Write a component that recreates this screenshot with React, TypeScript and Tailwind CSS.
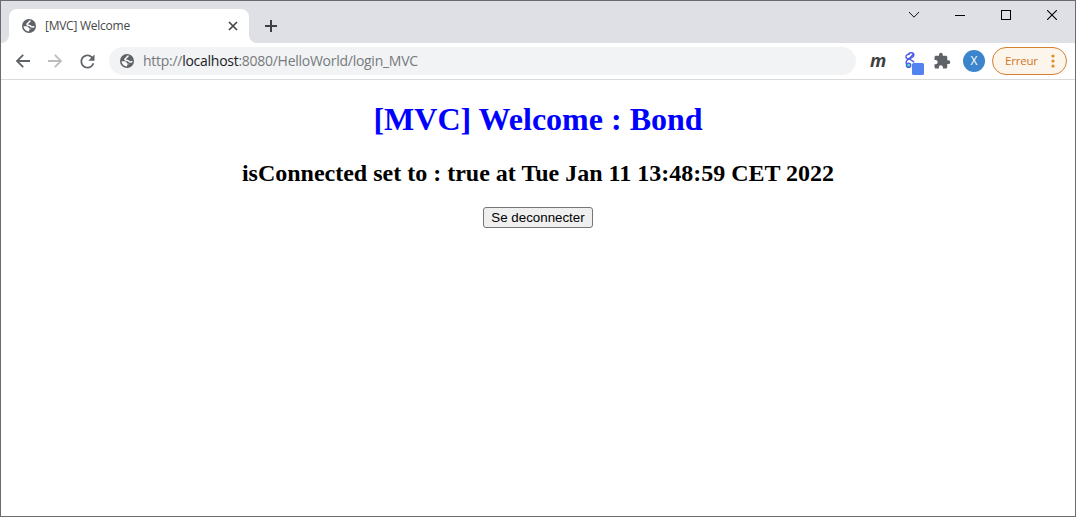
import type { ReactNode } from "react";
import { MdRefresh, MdExtension } from "react-icons/md";

function Globe() {
  return (
    <svg width="14" height="14" viewBox="0 0 14 14" className="block shrink-0">
      <circle cx="7" cy="7" r="7" fill="#5f6368" />
      <path
        d="M8.6 2C6.8 2.3 7.2 3.5 6 4.1 4.7 4.8 4.6 6 5.8 6.2c1.6.2 2.5.2 3.1 1.2.7 1 2.2.6 3.4-.1"
        fill="none"
        stroke="#fff"
        strokeWidth="1.5"
      />
      <path d="M1.5 7.3h2.7c1.7 0 2.6.9 2.7 2.1h1.6v1.2H7.1v1.8A5.5 5.5 0 0 1 1.5 7.3Z" fill="#fff" />
    </svg>
  );
}

function Arrow({ d, className }: { d: string; className?: string }) {
  return (
    <svg width="20" height="20" viewBox="0 0 20 20" className={className}>
      <path d={d} fill="none" stroke="currentColor" strokeWidth="1.8" />
    </svg>
  );
}

function WindowControl({ children }: { children: ReactNode }) {
  return <div className="flex h-[28px] w-[46px] items-center justify-center">{children}</div>;
}

function TabStrip() {
  return (
    <div className="flex h-[42px] shrink-0 justify-between bg-[#dfe0e6]">
      <div className="flex">
        <div className="flex w-2 items-end bg-white">
          <div className="h-full w-full rounded-br-lg bg-[#dfe0e6]" />
        </div>
        <div className="flex items-end bg-[#dfe0e6]">
          <div className="flex h-[34px] w-[240px] items-center rounded-t-lg bg-white pl-[13px] pr-[11px]">
            <Globe />
            <span className="ml-[9px] whitespace-nowrap font-['Open_Sans',sans-serif] text-[12px] leading-4 tracking-[-0.25px] text-[#45474a]">
              [MVC] Welcome
            </span>
            <svg width="10" height="10" viewBox="0 0 10 10" className="ml-auto block">
              <path d="m1 1 8 8M9 1 1 9" stroke="#45474a" strokeWidth="1.7" />
            </svg>
          </div>
        </div>
        <div className="flex items-end bg-white">
          <div className="flex h-full items-center rounded-bl-lg bg-[#dfe0e6] pl-[15px] pt-2">
            <svg width="14" height="14" viewBox="0 0 14 14" className="block">
              <path d="M7 1v12M1 7h12" stroke="#3c4043" strokeWidth="2" />
            </svg>
          </div>
        </div>
      </div>
      <div className="flex">
        <WindowControl>
          <svg width="12" height="8" viewBox="0 0 12 8"><path d="m1 1 5 5.2L11 1" fill="none" stroke="#111" /></svg>
        </WindowControl>
        <WindowControl>
          <div className="h-px w-[10px] bg-black" />
        </WindowControl>
        <WindowControl>
          <div className="h-[10px] w-[10px] border border-black" />
        </WindowControl>
        <WindowControl>
          <svg width="10" height="10" viewBox="0 0 10 10"><path d="m0 0 10 10m0-10-10 10" stroke="#000" strokeWidth="1.1" /></svg>
        </WindowControl>
      </div>
    </div>
  );
}

function Toolbar() {
  return (
    <div className="flex h-[37px] shrink-0 items-center border-b border-[#d9dadc] bg-white pl-3 pr-2 text-[#5f6368]">
      <Arrow d="M17 10H4.5M10.2 3.8 4 10l6.2 6.2" />
      <Arrow d="M3 10h12.5M9.8 3.8 16 10l-6.2 6.2" className="ml-3 text-[#babcbe]" />
      <MdRefresh size={21} className="-mr-px ml-3" />
      <div className="ml-3 flex h-7 w-[747px] items-center rounded-full bg-[#f1f3f4] pl-[11px]">
        <Globe />
        <span className="ml-[9px] whitespace-nowrap font-['Open_Sans',sans-serif] text-[14px] leading-5 tracking-[-0.27px] text-[#777a7e]">
          http://<span className="text-[#202124]">localhost</span>:8080/HelloWorld/login_MVC
        </span>
      </div>
      <span className="-mt-0.5 ml-[14px] w-4 font-['Open_Sans',sans-serif] text-[18px] font-bold italic leading-5 text-[#404040]">m</span>
      <svg width="20" height="28" viewBox="0 0 20 28" className="ml-[18px] block">
        <g fill="none" stroke="#4a5be8" strokeWidth="1.4" strokeLinecap="round">
          <path d="M4.5 7.3C5 5.2 9.8 5 9.8 8c0 2.8-3.4 2.9-6 4.6-2.2 1.5-2.2 3.8-.6 5" />
          <path d="M5.2 7.2C2 7.2 1 10 2.8 11.4c1.4 1 2.8 0 4-1.4L9.6 7M5.4 12l4.4 2.8" />
          <circle cx="4.6" cy="18.2" r="2.1" fill="#62e6c0" />
        </g>
        <rect x="8" y="16" width="12" height="12" rx="1.5" fill="#5184ee" />
      </svg>
      <MdExtension size={18} className="ml-[9px]" />
      <div className="ml-3 flex h-[22px] w-[22px] items-center justify-center rounded-full bg-[#3c84cc] font-['Open_Sans',sans-serif] text-[12px] text-white">
        X
      </div>
      <div className="ml-[7px] flex h-7 w-[75px] items-center rounded-full border border-[#d5802e] bg-[#fcf5ec] pl-3 pr-[11px]">
        <span className="font-['Open_Sans',sans-serif] text-[11.5px] leading-4 tracking-[-0.2px] text-[#d27620]">Erreur</span>
        <svg width="4" height="14" viewBox="0 0 4 14" className="ml-auto block" fill="#e08a20">
          <circle cx="2" cy="2" r="1.6" />
          <circle cx="2" cy="7" r="1.6" />
          <circle cx="2" cy="12" r="1.6" />
        </svg>
      </div>
    </div>
  );
}

export default function App() {
  return (
    <div className="flex h-[517px] w-[1076px] flex-col overflow-hidden border border-[#6b6b6e] bg-white">
      <TabStrip />
      <Toolbar />
      <main className="flex flex-col items-center pt-[21px] font-['Liberation_Serif',serif] font-bold">
        <h1 className="text-[32px] leading-[37px] text-[#0000ff]">[MVC] Welcome : Bond</h1>
        <h2 className="mt-[22px] text-[24px] leading-[27px] text-black">
          isConnected set to : true at Tue Jan 11 13:48:59 CET 2022
        </h2>
        <button className="mt-5 h-[21px] w-[110px] whitespace-nowrap rounded-[3px] border border-[#767676] bg-[#efefef] font-['Liberation_Sans',sans-serif] text-[13.333px] font-normal leading-[15px] text-black">
          Se deconnecter
        </button>
      </main>
    </div>
  );
}
